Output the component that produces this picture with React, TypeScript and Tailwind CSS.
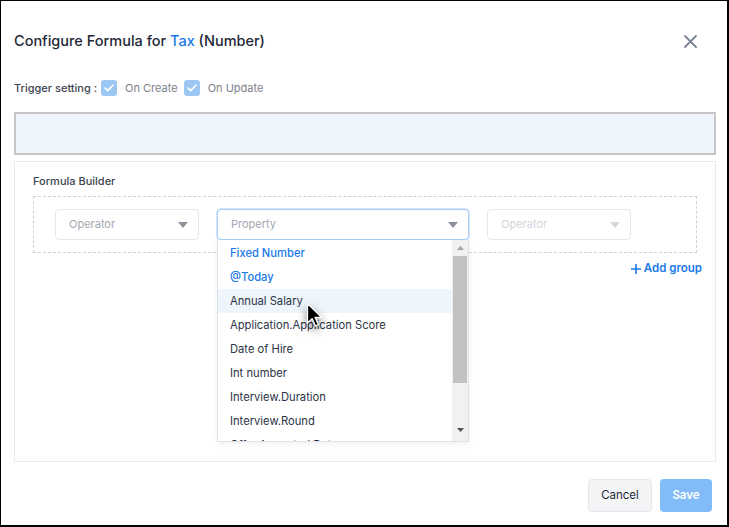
import React from 'react';

const items = [
  { label: 'Fixed Number', accent: true },
  { label: '@Today', accent: true },
  { label: 'Annual Salary', active: true },
  { label: 'Application.Application Score' },
  { label: 'Date of Hire' },
  { label: 'Int number' },
  { label: 'Interview.Duration' },
  { label: 'Interview.Round' },
  { label: 'Offer.Accepted Date' },
];

const Caret = ({ light }: { light?: boolean }) => (
  <svg width="10" height="6" viewBox="0 0 10 6" className="shrink-0">
    <path d="M0 0h10L5 6z" fill={light ? '#d4d7dc' : '#8c929b'} />
  </svg>
);

const Check = () => (
  <span className="flex h-4 w-4 items-center justify-center rounded-[3px] bg-[#9dc7f3]">
    <svg width="10" height="8" viewBox="0 0 10 8">
      <path d="M1 4l2.6 2.6L9 1.2" stroke="white" strokeWidth="1.6" fill="none" strokeLinecap="round" strokeLinejoin="round" />
    </svg>
  </span>
);

const Select = ({ label, disabled }: { label: string; disabled?: boolean }) => (
  <div className="flex h-[31px] w-[144px] items-center justify-between rounded-[4px] border border-[#e6e8eb] bg-white pl-[13px] pr-[10px]">
    <span className={disabled ? 'text-[11px] text-[#d1d5db]' : 'text-[11px] text-[#a3a8b0]'}>{label}</span>
    <Caret light={disabled} />
  </div>
);

const Dropdown = () => (
  <div className="absolute left-0 top-[31px] z-10 flex h-[202px] w-[252px] border border-[#dfe2e6] border-t-0 bg-white shadow-[0_2px_6px_rgba(0,0,0,0.06)]">
    <div className="flex-1 overflow-hidden pt-px">
      {items.map((it) => (
        <div
          key={it.label}
          className={`flex h-6 items-center pl-[12px] text-[11.2px] ${it.active ? 'bg-[#eef5fc]' : ''} ${
            it.accent ? 'font-medium text-[#1a7ae8]' : 'text-[#2b3446]'
          }`}
        >
          {it.label}
        </div>
      ))}
    </div>
    <div className="flex w-[16px] flex-col bg-[#f1f1f1]">
      <div className="flex h-[16px] items-center justify-center">
        <svg width="7" height="4" viewBox="0 0 7 4">
          <path d="M0 4L3.5 0 7 4z" fill="#a3a3a3" />
        </svg>
      </div>
      <div className="mx-px h-[127px] bg-[#c1c1c1]" />
      <div className="flex-1" />
      <div className="flex h-[16px] items-center justify-center pb-[6px]">
        <svg width="7" height="4" viewBox="0 0 7 4">
          <path d="M0 0h7L3.5 4z" fill="#505050" />
        </svg>
      </div>
    </div>
  </div>
);

const Cursor = () => (
  <svg
    width="20"
    height="28"
    viewBox="0 0 20 28"
    className="pointer-events-none absolute left-[305px] top-[301px] z-20 drop-shadow-[0_4px_5px_rgba(0,0,0,0.5)]"
  >
    <path d="M1.5 1.5v19.5l4.6-4.4 3.4 7.4 3-1.4-3.4-7.2h6.4z" fill="black" stroke="white" strokeWidth="1.3" strokeLinejoin="round" />
  </svg>
);

export default function App() {
  return (
    <div className="relative flex h-[527px] w-[729px] flex-col overflow-hidden border-b-2 border-l border-r-2 border-t border-black bg-white font-['Inter',sans-serif]">
      <div className="flex items-center justify-between pl-[13px] pr-[30px] pt-[28px]">
        <h1 className="text-[14.5px] font-medium leading-6 text-[#1f2937]">
          Configure Formula for <span className="text-[#1a7ae8]">Tax</span> (Number)
        </h1>
        <svg width="13" height="13" viewBox="0 0 13 13">
          <path d="M1 1l11 11M12 1L1 12" stroke="#7b8494" strokeWidth="1.8" strokeLinecap="round" />
        </svg>
      </div>

      <div className="mt-[27px] flex h-4 items-center pl-[13px] text-[11px]">
        <span className="mr-[4px] font-medium text-[#3d4451]">Trigger setting :</span>
        <Check />
        <span className="ml-2 mr-[6px] text-[#7b818b]">On Create</span>
        <Check />
        <span className="ml-2 text-[#7b818b]">On Update</span>
      </div>

      <div className="ml-[13px] mt-4 h-[43px] w-[702px] border-2 border-[#c6c6c6] bg-[#eef5fd]" />

      <div className="ml-[13px] mt-[6px] flex h-[301px] w-[702px] flex-col border border-[#e8eaed] px-[18px] pt-[11px]">
        <div className="text-[11px] font-medium leading-4 text-[#3d4451]">Formula Builder</div>
        <div className="mt-[7px] flex h-[57px] w-[664px] items-center border border-dashed border-[#cfcfcf] pl-[21px]">
          <Select label="Operator" />
          <div className="relative ml-[18px]">
            <div className="flex h-[31px] w-[252px] items-center justify-between rounded-[4px] border border-[#a9cdf6] bg-white pl-[13px] pr-[10px] shadow-[0_0_0_1px_#d6e7fb]">
              <span className="text-[11px] text-[#a3a8b0]">Property</span>
              <Caret />
            </div>
            <Dropdown />
          </div>
          <div className="ml-[18px]">
            <Select label="Operator" disabled />
          </div>
        </div>
        <div className="mr-[-5px] mt-[7px] flex justify-end">
          <span className="flex items-center gap-[3px] text-[11.5px] font-semibold text-[#1a7ae8]">
            <svg width="10" height="10" viewBox="0 0 10 10">
              <path d="M5 0v10M0 5h10" stroke="#1a7ae8" strokeWidth="1.6" />
            </svg>
            Add group
          </span>
        </div>
      </div>

      <div className="mr-[15px] mt-[17px] flex justify-end gap-2">
        <button className="h-[33px] w-[64px] rounded-[4px] border border-[#e4e6ea] bg-[#f3f4f6] text-[11.5px] text-[#1f2937]">
          Cancel
        </button>
        <button className="h-[33px] w-[52px] rounded-[4px] bg-[#82bcf8] text-[11.5px] font-semibold text-white">Save</button>
      </div>

      <Cursor />
    </div>
  );
}
